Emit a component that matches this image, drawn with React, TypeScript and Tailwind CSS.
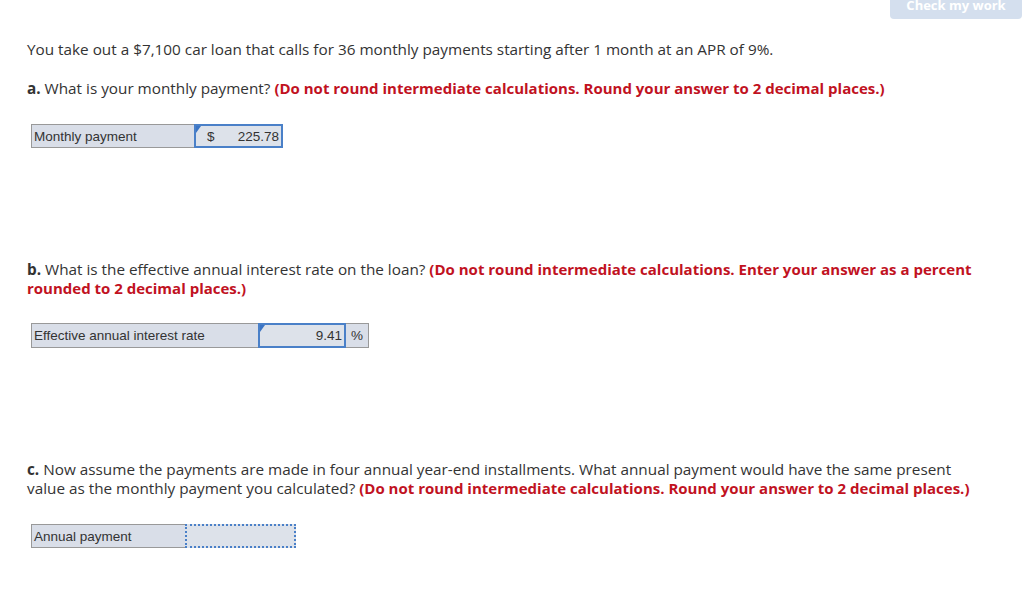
import React from "react";

const red = "text-[#c1121f] font-bold text-[15px]";

function Flag() {
  return (
    <span className="absolute left-0 top-0 w-0 h-0 border-t-[7px] border-t-[#3b74c4] border-r-[5px] border-r-transparent" />
  );
}

export default function App() {
  return (
    <div className="w-[1024px] h-[593px] bg-white text-[#333] overflow-hidden" style={{ fontFamily: '"Open Sans", sans-serif' }}>
      <div className="flex justify-end pr-[2px]">
        <div className="mt-[-12px] h-[31px] w-[132px] rounded-[4px] bg-[#d4dfee] text-white font-bold text-[13px] flex items-center justify-center pt-[4px]">
          Check my work
        </div>
      </div>
      <div className="pl-[27px] pr-[40px] text-[15.3px] leading-[19px]">
        <p className="mt-[21px]">You take out a $7,100 car loan that calls for 36 monthly payments starting after 1 month at an APR of 9%.</p>
        <p className="mt-[20px]"><span className="font-bold">a.</span> What is your monthly payment? <span className={red}>(Do not round intermediate calculations. Round your answer to 2 decimal places.)</span></p>

        <div className="mt-[26px] ml-[4px] flex h-[24px] text-[13.5px]" style={{ fontFamily: '"Liberation Sans", Arial, sans-serif' }}>
          <div className="w-[163px] bg-[#d9dee8] border border-[#999] border-r-0 px-[2px] flex items-center">Monthly payment</div>
          <div className="relative w-[89px] bg-[#dde2ea] border-2 border-[#4a80c8] flex items-center px-[2px]">
            <Flag />
            <span className="ml-[9px]">$</span>
            <span className="ml-auto">225.78</span>
          </div>
        </div>

        <p className="mt-[112px]"><span className="font-bold">b.</span> What is the effective annual interest rate on the loan? <span className={red}>(Do not round intermediate calculations. Enter your answer as a percent rounded to 2 decimal places.)</span></p>

        <div className="mt-[25px] ml-[4px] flex h-[25px] text-[13.5px]" style={{ fontFamily: '"Liberation Sans", Arial, sans-serif' }}>
          <div className="w-[227px] bg-[#d9dee8] border border-[#999] border-r-0 px-[2px] flex items-center">Effective annual interest rate</div>
          <div className="relative w-[88px] bg-[#dde2ea] border-2 border-[#4a80c8] flex items-center justify-end px-[2px]">
            <Flag />
            <span>9.41</span>
          </div>
          <div className="w-[23px] bg-[#d9dee8] border border-[#999] border-l-0 flex items-center justify-center">%</div>
        </div>

        <p className="mt-[112px]"><span className="font-bold">c.</span> Now assume the payments are made in four annual year-end installments. What annual payment would have the same present value as the monthly payment you calculated? <span className={red}>(Do not round intermediate calculations. Round your answer to 2 decimal places.)</span></p>

        <div className="mt-[26px] ml-[4px] flex h-[24px] text-[13.5px]" style={{ fontFamily: '"Liberation Sans", Arial, sans-serif' }}>
          <div className="w-[154px] bg-[#d9dee8] border border-[#999] border-r-0 px-[2px] flex items-center">Annual payment</div>
          <div className="w-[111px] bg-[#dde2ea] border-2 border-dotted border-[#4a80c8]" />
        </div>
      </div>
    </div>
  );
}
